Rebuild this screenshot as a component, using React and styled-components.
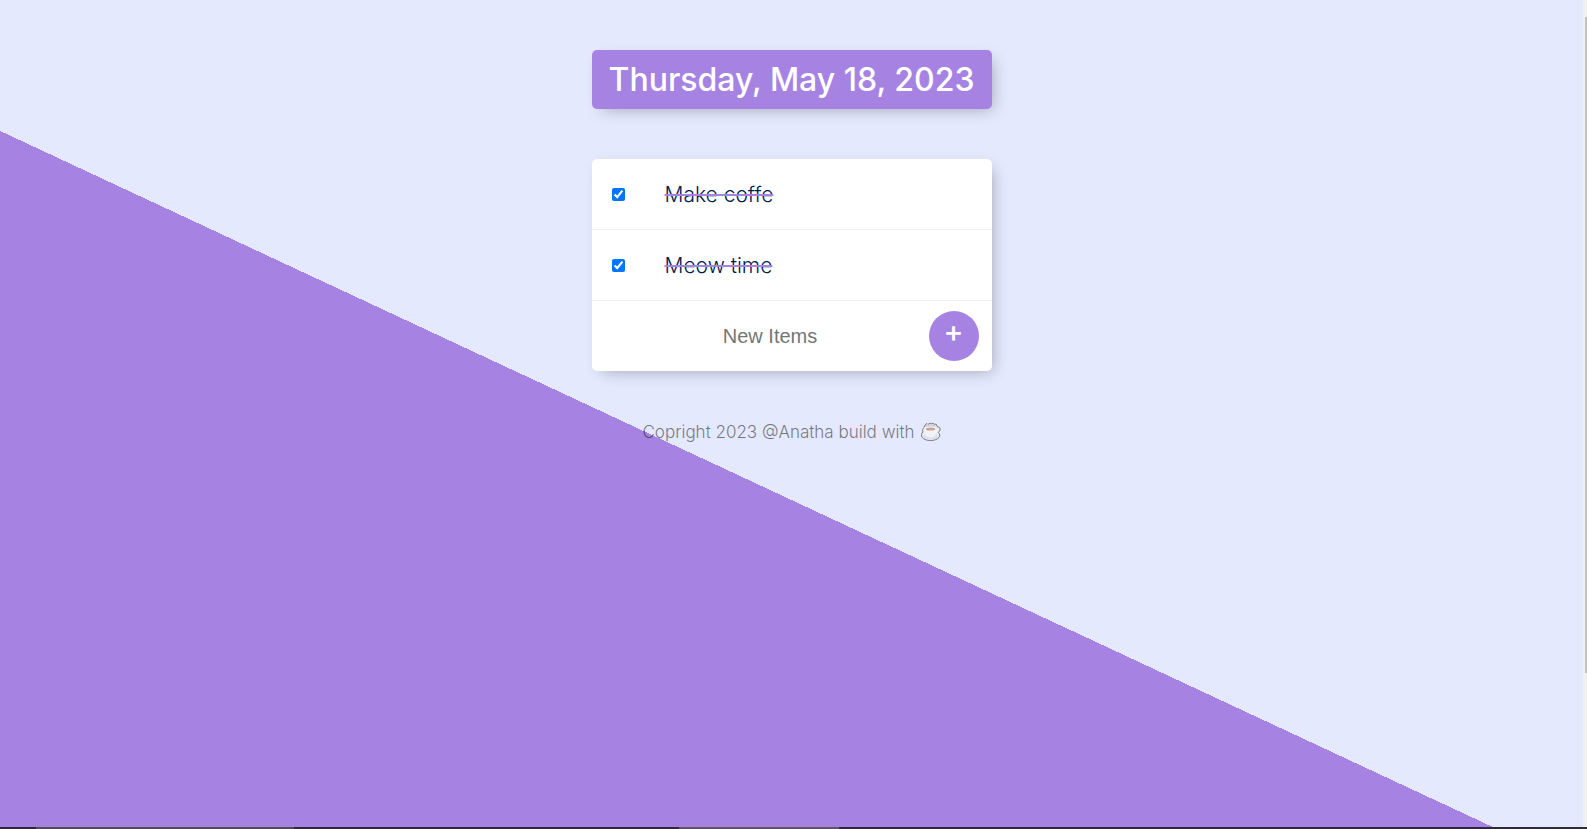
import React, { useState } from "react";
import styled, { createGlobalStyle } from "styled-components";

const violet = "#a683e3";
const mist = "#e4e9fd";

const GlobalStyle = createGlobalStyle`
  * { box-sizing: border-box; }
  body { margin: 0; font-family: Inter, "Open Sans", sans-serif; }
`;

const Screen = styled.div`
  display: flex;
  flex-direction: column;
  height: 100vh;
  overflow: hidden;
`;

const Viewport = styled.div`
  display: flex;
  flex: 1;
  min-height: 0;
`;

const Page = styled.main`
  flex: 1;
  display: flex;
  flex-direction: column;
  align-items: center;
  gap: 50px;
  padding: 50px 0;
  overflow: hidden;
  background: linear-gradient(25deg, ${violet} 50%, ${mist} 50%) 0 0 / 100% 1000px no-repeat;
`;

const Card = styled.section`
  width: 100%;
  max-width: 400px;
  border-radius: 5px;
  background: ${(p) => (p.$heading ? violet : "white")};
  box-shadow: 5px 5px 15px -5px rgba(0, 0, 0, 0.3);
`;

const Title = styled.h1`
  margin: 0;
  padding: 10px;
  color: white;
  font-size: 32px;
  font-weight: 500;
  line-height: 39px;
  text-align: center;
  white-space: nowrap;
`;

const Item = styled.label`
  display: flex;
  align-items: center;
  height: 71px;
  border-bottom: 1px solid #f1f1f1;
`;

const Check = styled.input`
  width: 13px;
  height: 13px;
  margin: 20px;
`;

const ItemText = styled.span`
  margin-left: 20px;
  color: #00204a;
  font-size: 21px;
  font-weight: 300;
  text-decoration: ${(p) => (p.$done ? `line-through 2px ${violet}` : "none")};
`;

const NewItem = styled.form`
  display: flex;
  align-items: center;
  height: 70px;
  padding: 0 13px 0 20px;
`;

const NewItemInput = styled.input`
  flex: 1;
  min-width: 0;
  height: 60px;
  border: 0;
  outline: 0;
  background: transparent;
  font: 20px "Liberation Sans", Arial, sans-serif;
  text-align: center;
  &::placeholder { color: #757575; }
`;

const AddButton = styled.button`
  width: 50px;
  height: 50px;
  padding: 0 0 10px;
  border: 0;
  border-radius: 50%;
  background: ${violet};
  color: white;
  font: 500 30px Inter, sans-serif;
`;

const Footer = styled.footer`
  display: flex;
  align-items: center;
  gap: 6px;
  color: rgba(0, 0, 0, 0.5);
  font-size: 17px;
  font-weight: 300;
  line-height: 22px;
`;

const ScrollTrack = styled.div`
  width: 4px;
  padding: 17px 0 0 2px;
  background: #f1f1f1;
`;

const ScrollThumb = styled.div`
  height: 81%;
  background: #c1c1c1;
`;

const Taskbar = styled.div`
  display: flex;
  height: 2px;
  background: #30263f;
`;

const TaskSegment = styled.div`
  flex: ${(p) => p.$span};
  background: ${(p) => p.$tone};
`;

function Coffee() {
  return (
    <svg width="20" height="20" viewBox="0 0 20 20" role="img" aria-label="coffee">
      <g opacity="0.6" stroke="#333" strokeWidth="1" strokeLinejoin="round">
        <path
          d="M3 5.500L4 3l2-1.500 1 1 2-1.500 1 1.200L12 1l1 1.500 2-.5 1.500 3c2 0 3 1 2.500 3-.3 1-1 2-1.700 2.500 1.700 1.500 2 3.500.7 5C16 17.500 13 18.500 9.500 18.500S3 17.500 1.300 15.500C0 14 .3 11.500 2 10 1.300 8 1.500 6.500 3 5.500z"
          fill="#eee"
        />
        <g stroke="none">
          <ellipse cx="9.500" cy="14.500" rx="7.500" ry="3" fill="#dcd9e0" />
          <path d="M3 7c0 5 2 8.500 6.500 8.500S16 12 16 7z" fill="#faf8f8" />
          <path d="M4 5l1-2 2 0 2-1 3 0 2 1 1 2z" fill="#c4c1c8" />
          <ellipse cx="9.500" cy="7" rx="6.500" ry="2.500" fill="#fff" />
          <ellipse cx="9.500" cy="7" rx="4.800" ry="1.500" fill="#b8724e" />
        </g>
      </g>
    </svg>
  );
}

export default function App() {
  const [items, setItems] = useState([
    { text: "Make coffe", done: true },
    { text: "Meow time", done: true },
  ]);
  const [draft, setDraft] = useState("");

  const toggle = (index) =>
    setItems(items.map((it, i) => (i === index ? { ...it, done: !it.done } : it)));

  const add = (event) => {
    event.preventDefault();
    if (draft.trim()) setItems([...items, { text: draft, done: false }]);
    setDraft("");
  };

  return (
    <Screen>
      <GlobalStyle />
      <Viewport>
        <Page>
          <Card $heading>
            <Title>Thursday, May 18, 2023</Title>
          </Card>
          <Card>
            {items.map((item, i) => (
              <Item key={i}>
                <Check type="checkbox" checked={item.done} onChange={() => toggle(i)} />
                <ItemText $done={item.done}>{item.text}</ItemText>
              </Item>
            ))}
            <NewItem onSubmit={add}>
              <NewItemInput
                type="text"
                aria-label="New item"
                placeholder="New Items"
                value={draft}
                onChange={(e) => setDraft(e.target.value)}
              />
              <AddButton type="submit">+</AddButton>
            </NewItem>
          </Card>
          <Footer>
            Copright 2023 @Anatha build with <Coffee />
          </Footer>
        </Page>
        <ScrollTrack>
          <ScrollThumb />
        </ScrollTrack>
      </Viewport>
      <Taskbar>
        <TaskSegment $span={36} />
        <TaskSegment $span={258} $tone="#504a55" />
        <TaskSegment $span={385} />
        <TaskSegment $span={160} $tone="#5f5566" />
        <TaskSegment $span={748} $tone="linear-gradient(90deg, #30263f 85%, #2e2f38)" />
      </Taskbar>
    </Screen>
  );
}
